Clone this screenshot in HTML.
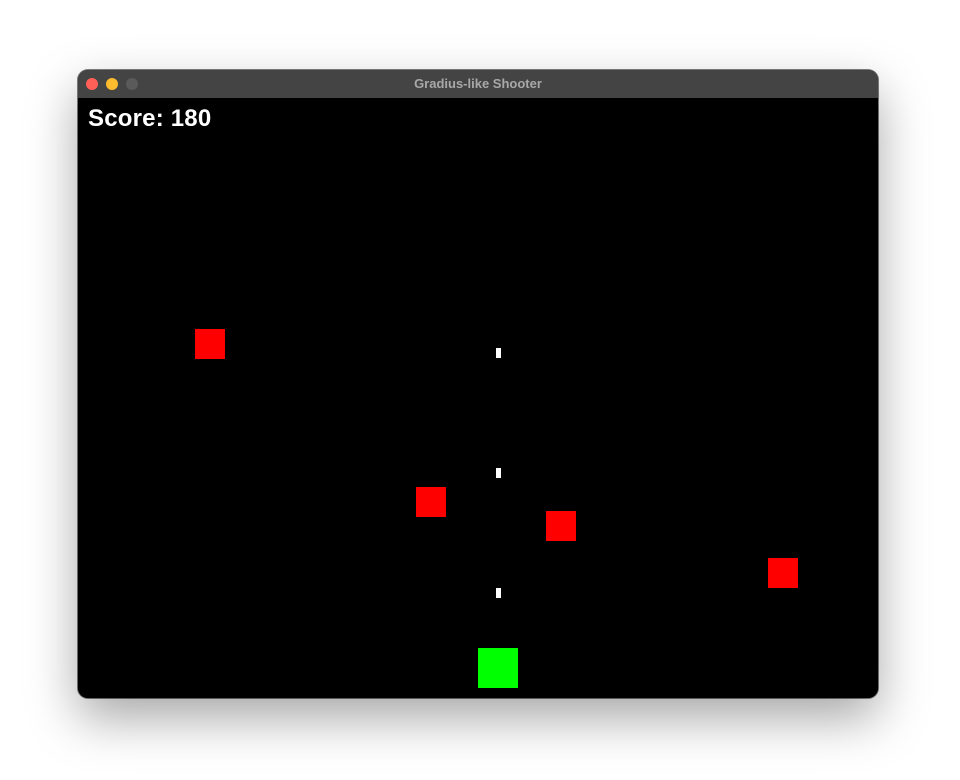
<!DOCTYPE html>
<html><head><style>
body{margin:0;width:960px;height:780px;background:#fff;position:relative;overflow:hidden;font-family:"Liberation Sans",sans-serif}
.win{position:absolute;left:78px;top:70px;width:800px;height:628px;border-radius:10px;background:#000;box-shadow:0 20px 50px rgba(0,0,0,.35),0 0 0 1px rgba(0,0,0,.5);overflow:hidden}
.tb{position:absolute;left:0;top:0;width:800px;height:28px;background:#444;color:#a8a8a8;font-size:13px;font-weight:bold;text-align:center;line-height:27px}
.d{position:absolute;top:8px;width:12px;height:12px;border-radius:50%}
.c{position:absolute;left:0;top:28px;width:800px;height:600px;background:#000}
.r{position:absolute;width:30px;height:30px;background:#f00}
.b{position:absolute;width:5px;height:10px;background:#fff}
</style></head><body>
<div class="win">
<div class="tb">Gradius-like Shooter
<div class="d" style="left:8px;background:#fe5f57"></div>
<div class="d" style="left:28px;background:#febc2e"></div>
<div class="d" style="left:48px;background:#5a5a5a"></div>
</div>
<div class="c">
<div style="position:absolute;left:10px;top:7px;color:#fff;font-weight:bold;font-size:24px;letter-spacing:0.2px">Score: 180</div>
<div class="r" style="left:117px;top:231px"></div>
<div class="r" style="left:338px;top:389px"></div>
<div class="r" style="left:468px;top:413px"></div>
<div class="r" style="left:690px;top:460px"></div>
<div class="b" style="left:418px;top:250px"></div>
<div class="b" style="left:418px;top:370px"></div>
<div class="b" style="left:418px;top:490px"></div>
<div style="position:absolute;left:400px;top:550px;width:40px;height:40px;background:#0f0"></div>
</div>
</div>
</body></html>
